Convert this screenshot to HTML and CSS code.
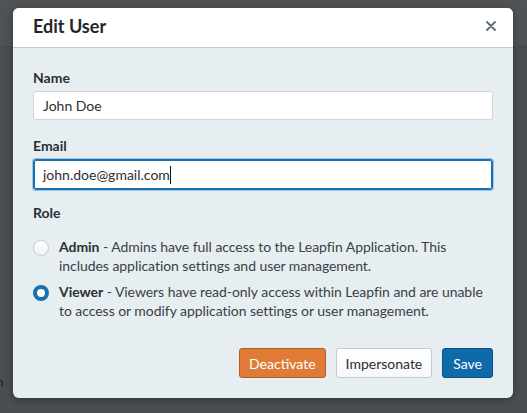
FILE: index.html
```html
<!DOCTYPE html>
<html>
<head>
<meta charset="utf-8">
<link rel="stylesheet" href="styles.css">
</head>
<body>
<div class="backdrop">
  <div class="bg-top"></div>
  <div class="bg-text">n</div>
  <div class="modal">
    <div class="modal-header">
      <h1 class="title">Edit User</h1>
      <button class="close" aria-label="Close">
        <svg width="10" height="10" viewBox="0 0 10 10"><path d="M1 1 L9 9 M9 1 L1 9" stroke="#5b6b79" stroke-width="1.8" stroke-linecap="round"/></svg>
      </button>
    </div>
    <div class="modal-body">
      <label class="label">Name</label>
      <div class="input">John Doe</div>
      <label class="label">Email</label>
      <div class="input focused">john.doe@gmail.com<span class="caret"></span></div>
      <label class="label">Role</label>
      <div class="radio-row">
        <span class="radio"></span>
        <p class="radio-text"><b>Admin</b> - Admins have full access to the Leapfin Application. This includes application settings and user management.</p>
      </div>
      <div class="radio-row">
        <span class="radio checked"></span>
        <p class="radio-text"><b>Viewer</b> - Viewers have read-only access within Leapfin and are unable to access or modify application settings or user management.</p>
      </div>
      <div class="actions">
        <button class="btn btn-orange">Deactivate</button>
        <button class="btn btn-white">Impersonate</button>
        <button class="btn btn-blue">Save</button>
      </div>
    </div>
  </div>
</div>
</body>
</html>
```
FILE: styles.css
```css
* { box-sizing: border-box; }
html, body { margin: 0; padding: 0; }
body {
  font-family: Lato, "Liberation Sans", sans-serif;
  color: #2b2f33;
}
.backdrop {
  position: relative;
  width: 527px;
  height: 413px;
  background: #4b4e51;
  overflow: hidden;
  padding: 8px 0 0 13px;
}
.bg-top {
  position: absolute;
  left: 0; top: 0; right: 0;
  height: 47px;
  background: #505356;
  border-bottom: 1px solid #44474a;
}
.bg-text {
  position: absolute;
  left: -4px;
  top: 373px;
  color: #1e2022;
  font-size: 14px;
}
.modal {
  position: relative;
  width: 500px;
  height: 390px;
  background: #e6eef2;
  border-radius: 6px;
  overflow: hidden;
  box-shadow: 0 2px 8px rgba(0,0,0,0.3);
}
.modal-header {
  height: 40px;
  background: #fff;
  border-bottom: 1px solid #c3cbd1;
  display: flex;
  align-items: center;
  justify-content: space-between;
  padding: 0 16px 3px 20px;
}
.title {
  margin: 0;
  font-size: 18px;
  font-weight: 700;
  color: #23272b;
}
.close {
  border: 0;
  background: none;
  padding: 0;
  width: 12px;
  height: 12px;
  display: flex;
  align-items: center;
  justify-content: center;
}
.modal-body {
  padding: 21px 20px 0 20px;
  display: flex;
  flex-direction: column;
}
.label {
  display: block;
  font-size: 14px;
  font-weight: 700;
  color: #2b2f33;
  margin-bottom: 5px;
  line-height: 17px;
}
.input {
  height: 29px;
  background: #fff;
  border: 1px solid #cfd5da;
  border-radius: 3px;
  padding: 0 9px;
  font-size: 14px;
  line-height: 27px;
  color: #2b2f33;
  margin-bottom: 17px;
}
.input.focused {
  height: 31px;
  line-height: 29px;
  border: 1px solid #1a6fb0;
  box-shadow: 0 0 0 1px #9cc3e2, inset 0 0 0 1px #1a6fb0;
  margin-bottom: 14px;
}
.caret {
  display: inline-block;
  width: 1px;
  height: 18px;
  background: #111;
  vertical-align: middle;
  margin-top: -3px;
}
.radio-row {
  display: flex;
  align-items: flex-start;
  margin-top: 7px;
}
.label + .radio-row { margin-top: 11px; }
.radio {
  flex: none;
  width: 16px;
  height: 16px;
  border-radius: 50%;
  background: linear-gradient(#fff, #f1f3f5);
  border: 1px solid #c7cdd2;
  margin: 3px 10px 0 0;
}
.radio.checked {
  background: #fff;
  border: 4.5px solid #1a6fb0;
}
.radio-text {
  margin: 0;
  font-size: 14px;
  line-height: 19px;
  color: #3a3f44;
  letter-spacing: -0.05px;
}
.radio-text b { color: #2b2f33; }
.actions {
  display: flex;
  justify-content: flex-end;
  gap: 10px;
  margin-top: 28px;
}
.btn {
  font-family: Lato, "Liberation Sans", sans-serif;
  font-size: 14px;
  height: 30px;
  border-radius: 3px;
  padding: 0 9px;
  cursor: pointer;
}
.btn-orange {
  background: #e07b37;
  border: 1px solid #b35e22;
  color: #fff;
}
.btn-white {
  background: linear-gradient(#ffffff, #f6f8f9);
  border: 1px solid #c4cbd1;
  color: #2b2f33;
}
.btn-blue {
  background: #0e6aa8;
  border: 1px solid #0a5287;
  color: #fff;
  padding: 0 10px;
}
```
